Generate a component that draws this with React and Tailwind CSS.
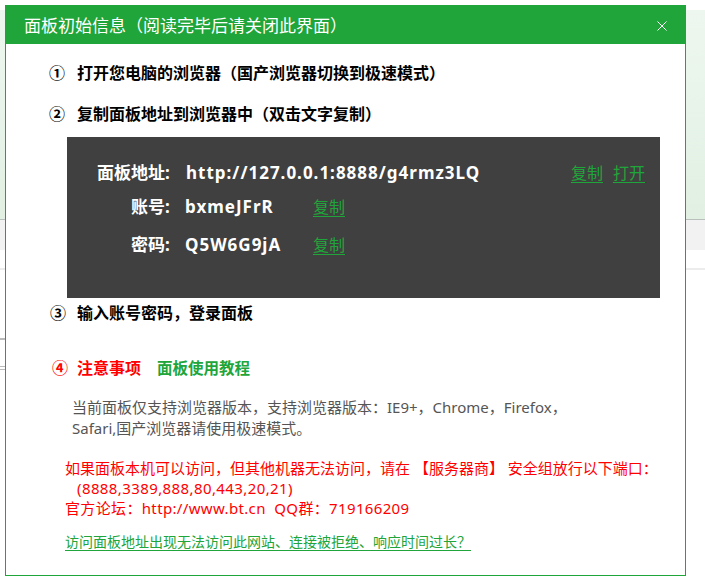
export default function App() {
  const font = { fontFamily: '"Noto Sans", "Noto Sans CJK SC", sans-serif' };
  return (
    <div className="relative w-[705px] h-[585px] overflow-hidden bg-white" style={font}>
      {/* background page */}
      <div className="h-[10px] bg-white" />
      <div className="h-[210px] bg-gradient-to-b from-[#eef7ef] to-[#e1f0e3] border-b border-[#b9bfba]" />
      <div className="h-[30px] bg-[#f2f2f2]" />
      <div className="h-[18px] bg-white" />
      <div className="h-[2px] bg-[#ececec]" />
      <div className="h-[68px]" />
      <div className="h-[2px] w-[8px] bg-[#bbb]" />
      <div className="h-[26px]" />
      <div className="h-[1px] w-[8px] bg-[#bbb]" />
      <div className="h-[2px]" />
      <div className="h-[1px] w-[8px] bg-[#bbb]" />

      {/* dialog */}
      <div className="absolute left-[5px] top-[5px] w-[681px] h-[571px] border border-[#20a53a] bg-white flex flex-col">
        <div className="h-[38px] bg-[#20a53a] flex items-center justify-between pl-[18px] pr-[18px]">
          <span className="text-white text-[17px] leading-none">面板初始信息（阅读完毕后请关闭此界面）</span>
          <svg width="10" height="10" viewBox="0 0 10 10" className="mt-[1px]">
            <path d="M0.5 0.5 L9.5 9.5 M9.5 0.5 L0.5 9.5" stroke="#fff" strokeWidth="1" fill="none" />
          </svg>
        </div>

        <div className="flex flex-col">
          <div className="mt-[14px] h-[30px] leading-[30px] pl-[43px] text-[16px] font-bold text-black flex items-center">
            <span className="w-[28px]">①</span>
            <span>打开您电脑的浏览器（国产浏览器切换到极速模式）</span>
          </div>
          <div className="mt-[11px] h-[30px] leading-[30px] pl-[43px] text-[16px] font-bold text-black flex items-center">
            <span className="w-[28px]">②</span>
            <span>复制面板地址到浏览器中（双击文字复制）</span>
          </div>

          <div className="mt-[8px] ml-[61px] w-[593px] h-[161px] bg-[#404040] pl-[30px] pr-[15px] pt-[19px] text-white text-[17px] font-bold">
            <div className="h-[34px] flex items-center">
              <span className="w-[78px] text-right">面板地址<span className="inline-block w-[10px] text-left">:</span></span>
              <span className="ml-[11px] tracking-[1px]">http://127.0.0.1:8888/g4rmz3LQ</span>
              <span className="ml-auto flex gap-[10px] font-normal text-[16px] text-[#20a53a] underline underline-offset-[3px]">
                <span>复制</span>
                <span>打开</span>
              </span>
            </div>
            <div className="h-[34px] flex items-center">
              <span className="w-[78px] text-right">账号<span className="inline-block w-[10px] text-left">:</span></span>
              <span className="ml-[10px] w-[128px] tracking-[1px]">bxmeJFrR</span>
              <span className="font-normal text-[16px] text-[#20a53a] underline underline-offset-[3px]">复制</span>
            </div>
            <div className="mt-[4px] h-[34px] flex items-center">
              <span className="w-[78px] text-right">密码<span className="inline-block w-[10px] text-left">:</span></span>
              <span className="ml-[10px] w-[128px] tracking-[1px]">Q5W6G9jA</span>
              <span className="font-normal text-[16px] text-[#20a53a] underline underline-offset-[3px]">复制</span>
            </div>
          </div>

          <div className="h-[30px] leading-[30px] pl-[44px] text-[16px] font-bold text-black flex items-center">
            <span className="w-[27px]">③</span>
            <span>输入账号密码，登录面板</span>
          </div>

          <div className="mt-[25px] h-[30px] leading-[30px] pl-[46px] text-[16px] font-bold flex items-center">
            <span className="w-[25px] text-[#ff0000]">④</span>
            <span className="text-[#ff0000]">注意事项</span>
            <span className="ml-[16px] text-[#20a53a] text-[15.5px]">面板使用教程</span>
          </div>

          <div className="mt-[14px] pl-[66px] text-[15px] leading-[21px] text-[#555]">
            <div>当前面板仅支持浏览器版本，支持浏览器版本：IE9+，Chrome，Firefox，</div>
            <div>Safari,国产浏览器请使用极速模式。</div>
          </div>

          <div className="mt-[19px] pl-[59px] text-[15px] leading-[20px] text-[#ff0000]">
            <div>如果面板本机可以访问，但其他机器无法访问，请在 【服务器商】 安全组放行以下端口：</div>
            <div className="pl-[12px] tracking-[0.4px]">(8888,3389,888,80,443,20,21)</div>
            <div className="tracking-[0.35px]">官方论坛：http://www.bt.cn&nbsp;&nbsp;QQ群：719166209</div>
          </div>

          <div className="mt-[14px] pl-[59px] text-[14px] leading-[20px]">
            <span className="text-[#20a53a] underline underline-offset-[3px]">访问面板地址出现无法访问此网站、连接被拒绝、响应时间过长？</span>
          </div>
        </div>
      </div>
    </div>
  );
}
